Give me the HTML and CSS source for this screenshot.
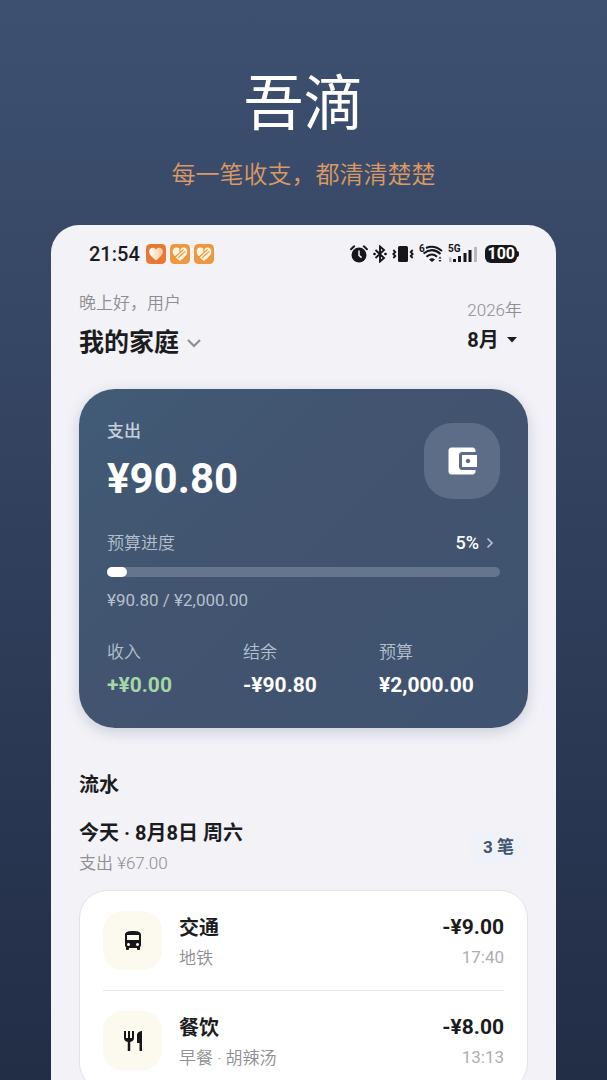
FILE: index.html
```html
<!DOCTYPE html>
<html lang="zh-CN">
<head>
<meta charset="utf-8">
<meta name="viewport" content="width=device-width, initial-scale=1">
<title>吾滴</title>
<link rel="stylesheet" href="styles.css">
</head>
<body>
<header class="hero">
  <h1 class="hero-title">吾滴</h1>
  <p class="hero-subtitle">每一笔收支，都清清楚楚</p>
</header>
<main class="phone">
  <div class="status">
    <div class="status-left">
      <span class="clock">21:54</span>
      <svg class="app" viewBox="0 0 20 20" aria-hidden="true"><defs><linearGradient id="h" x1="0" x2="1"><stop offset="0" stop-color="#fff"/><stop offset="1" stop-color="#ffc99b"/></linearGradient></defs><rect width="20" height="20" rx="4.5" fill="#e87736"/><path d="M10 16.500C6 13 3.200 11 3.200 7.600C3.200 5 5 3.800 6.700 3.800C8.300 3.800 9.500 4.700 10 5.700C10.500 4.700 11.700 3.800 13.300 3.800C15 3.800 16.800 5 16.800 7.600C16.800 11 14 13 10 16.500Z" fill="url(#h)"/></svg>
      <svg class="app" viewBox="0 0 20 20" aria-hidden="true"><rect width="20" height="20" rx="4.500" fill="#ed983f"/><path d="M10 17C6 13.500 2.600 11 2.600 7.400C2.600 4.800 4.500 3.400 6.500 3.400C8.200 3.400 9.500 4.300 10 5.400C10.500 4.300 11.800 3.400 13.500 3.400C15.500 3.400 17.400 4.800 17.400 7.400C17.400 11 14 13.500 10 17Z" fill="#fff3df"/><path d="M4.500 13.500L13.300 5.900M8.300 13.600L14.800 7.900M10 4V7.500" fill="none" stroke="#ed983f" stroke-width="1.200" stroke-linecap="round"/></svg>
      <svg class="app" viewBox="0 0 20 20" aria-hidden="true"><rect width="20" height="20" rx="4.500" fill="#ed983f"/><path d="M10 17C6 13.500 2.600 11 2.600 7.400C2.600 4.800 4.500 3.400 6.500 3.400C8.200 3.400 9.500 4.300 10 5.400C10.500 4.300 11.800 3.400 13.500 3.400C15.500 3.400 17.400 4.800 17.400 7.400C17.400 11 14 13.500 10 17Z" fill="#fff3df"/><path d="M4.500 13.500L13.300 5.900M8.300 13.600L14.800 7.900M10 4V7.500" fill="none" stroke="#ed983f" stroke-width="1.200" stroke-linecap="round"/></svg>
    </div>
    <div class="status-right">
      <svg width="18" height="18" viewBox="0 0 18 18" aria-hidden="true"><circle cx="9" cy="10" r="7.500" fill="#17171a"/><path d="M1 4.200L4.200 1.300M17 4.200L13.800 1.300" stroke="#17171a" stroke-width="2" stroke-linecap="round"/><path d="M9 5.500V10.300L11.600 12.600" fill="none" stroke="#f2f2f7" stroke-width="1.500"/></svg>
      <svg width="14" height="18" viewBox="0 0 14 18" aria-hidden="true"><path d="M2.500 5L11 13L7 16.500V1.500L11 5L2.500 13" fill="none" stroke="#17171a" stroke-width="1.900"/><circle cx="1.500" cy="9" r="1.300"/><circle cx="12.500" cy="9" r="1.300"/></svg>
      <svg width="22" height="18" viewBox="0 0 22 18" aria-hidden="true"><rect x="6" y="1" width="10" height="16" rx="1.500" fill="#17171a"/><path d="M1.300 5L3.300 7L1.300 9L3.300 11L1.300 13M20.700 5L18.700 7L20.700 9L18.700 11L20.700 13" fill="none" stroke="#17171a" stroke-width="1.800"/></svg>
      <svg width="24" height="20" viewBox="0 0 24 20" aria-hidden="true"><text x="0" y="8" class="tiny">6</text><g fill="none" stroke="#17171a" stroke-width="2"><path d="M7 4Q15 0.500 23 7M4.500 9.500Q13.500 2.500 21.500 10M7.500 12.800Q13 8.300 18 12.800"/></g><path d="M10 15.500Q13 13 16 15.500L13 18Z" fill="#17171a"/><path d="M19.500 14.500L21 12.500L22.500 14.500ZM19.500 16L21 18L22.500 16Z" fill="#17171a"/></svg>
      <svg width="30" height="20" viewBox="0 0 30 20" aria-hidden="true"><text x="0" y="8" class="tiny">5G</text><path d="M1 13.500h2.500v4.500h-2.500z" fill="#b8b8bd"/><path d="M5 15h3v3h-3zM10 12h3v6h-3zM15.500 9h3v9h-3zM20.500 6h3v12h-3z" fill="#17171a"/><path d="M26 3h3v15h-3z" fill="#b8b8bd"/></svg>
      <span class="battery">100</span>
    </div>
  </div>

  <section class="top">
    <div>
      <p class="muted">晚上好，用户</p>
      <button class="family" type="button">我的家庭<svg width="16" height="16" viewBox="0 0 16 16" aria-hidden="true"><path d="M2 5L8 11L14 5" fill="none" stroke="#8e8e93" stroke-width="2.200"/></svg></button>
    </div>
    <div class="date">
      <p class="muted">2026年</p>
      <button class="month" type="button">8月<svg width="12" height="8" viewBox="0 0 12 8" aria-hidden="true"><path d="M1 1H11L6 6.500Z" fill="#1c1c1e"/></svg></button>
    </div>
  </section>

  <section class="summary">
    <div class="summary-head">
      <div>
        <p class="spend-label">支出</p>
        <p class="spend">¥90.80</p>
      </div>
      <div class="wallet"><svg width="36" height="36" viewBox="0 0 24 24" aria-hidden="true"><path fill="#fff" d="M21 18v1c0 1.100-.9 2-2 2H5c-1.110 0-2-.9-2-2V5c0-1.100.89-2 2-2h14c1.100 0 2 .9 2 2v1h-9c-1.110 0-2 .9-2 2v8c0 1.100.89 2 2 2h9zm-9-2h10V8H12v8zm4-2.500c-.83 0-1.500-.67-1.500-1.500s.67-1.500 1.500-1.500 1.500.67 1.500 1.500-.67 1.500-1.500 1.500z"/></svg></div>
    </div>
    <div class="budget-head">
      <span id="budget">预算进度</span>
      <a class="percent" href="#budget">5%<svg width="8" height="12" viewBox="0 0 8 12" aria-hidden="true"><path d="M1.500 1.500L6 6L1.500 10.500" fill="none" stroke="#b9c4d6" stroke-width="1.600"/></svg></a>
    </div>
    <div class="track" role="progressbar" aria-labelledby="budget" aria-valuenow="5" aria-valuemin="0" aria-valuemax="100"><div class="fill" style="width:5%"></div></div>
    <p class="budget-text">¥90.80 / ¥2,000.00</p>
    <dl class="stats">
      <div><dt>收入</dt><dd class="income">+¥0.00</dd></div>
      <div><dt>结余</dt><dd>-¥90.80</dd></div>
      <div><dt>预算</dt><dd>¥2,000.00</dd></div>
    </dl>
  </section>

  <section class="flow">
    <h2 class="heading">流水</h2>
    <div class="day">
      <div>
        <h3 class="heading">今天 · 8月8日 周六</h3>
        <p class="muted">支出 ¥67.00</p>
      </div>
      <span class="count">3 笔</span>
    </div>
    <ul class="list">
      <li class="row">
        <div class="icon"><svg width="24" height="24" viewBox="0 0 24 24" aria-hidden="true"><path fill="#17171a" d="M4 16c0 .88.390 1.670 1 2.220V20c0 .55.450 1 1 1h1c.55 0 1-.45 1-1v-1h8v1c0 .55.450 1 1 1h1c.55 0 1-.45 1-1v-1.780c.61-.55 1-1.340 1-2.220V6c0-3.500-3.580-4-8-4s-8 .5-8 4v10zm3.500 1c-.83 0-1.500-.67-1.500-1.500S6.670 14 7.500 14s1.500.67 1.500 1.500S8.330 17 7.500 17zm9 0c-.83 0-1.500-.67-1.500-1.500s.67-1.500 1.500-1.500 1.500.67 1.500 1.500-.67 1.500-1.500 1.500zm1.500-6H6V6h12v5z"/></svg></div>
        <div class="info"><p class="heading">交通</p><p class="muted">地铁</p></div>
        <div class="cost"><p class="amount">-¥9.00</p><p class="time">17:40</p></div>
      </li>
      <li class="row">
        <div class="icon"><svg width="24" height="24" viewBox="0 0 24 24" aria-hidden="true"><path fill="#17171a" d="M11 9H9V2H7v7H5V2H3v7c0 2.120 1.660 3.840 3.750 3.970V22h2.500v-9.030C11.340 12.840 13 11.120 13 9V2h-2v7zm5-3v8h2.500v8H21V2c-2.760 0-5 2.240-5 4z"/></svg></div>
        <div class="info"><p class="heading">餐饮</p><p class="muted">早餐 · 胡辣汤</p></div>
        <div class="cost"><p class="amount">-¥8.00</p><p class="time">13:13</p></div>
      </li>
    </ul>
  </section>
</main>
</body>
</html>
```
FILE: styles.css
```css
* { box-sizing: border-box; margin: 0; padding: 0; }

body {
  height: 100vh;
  overflow: hidden;
  display: flex;
  flex-direction: column;
  padding: 67px 51px 0;
  background: linear-gradient(#3e5070, #364765 30%, #222d46);
  color: #1c1c1e;
  font-family: Roboto, "Noto Sans CJK SC", sans-serif;
  font-size: 17px;
  line-height: 24px;
}

button {
  border: 0;
  background: none;
  color: inherit;
  font-family: inherit;
  display: flex;
  align-items: center;
  cursor: pointer;
}

svg { flex: none; display: block; }

.hero { text-align: center; margin-bottom: 34px; }
.hero-title { color: #fff; font-size: 60px; font-weight: 400; line-height: 76px; }
.hero-subtitle { color: #dc9a62; font-size: 24px; font-weight: 350; line-height: 32px; margin-top: 16px; }

.phone {
  flex: 1 0 auto;
  padding: 16px 28px 0;
  border-radius: 28px 28px 0 0;
  background: #f2f2f7;
}

.status { display: flex; justify-content: space-between; padding: 0 11px 0 10px; height: 26px; }
.status-left { display: flex; align-items: center; gap: 4px; }
.status-right { display: flex; align-items: center; gap: 5px; }
.clock { padding-right: 2px; font-size: 20px; font-weight: 500; }
.app { width: 20px; height: 20px; }
.tiny { font-size: 10px; font-weight: 700; fill: #17171a; }
.battery {
  position: relative;
  margin-left: 2px;
  padding: 0 2px;
  border-radius: 6px;
  background: #17171a;
  color: #fff;
  font-size: 16px;
  font-weight: 700;
  line-height: 18px;
}
.battery::after {
  content: "";
  position: absolute;
  left: 100%;
  top: 6px;
  width: 2px;
  height: 6px;
  border-radius: 0 2px 2px 0;
  background: #17171a;
}

.muted { color: #8e8e93; font-weight: 350; }
.heading { font-size: 20px; font-weight: 700; line-height: 28px; }
.amount { font-size: 21px; font-weight: 700; line-height: 28px; }

.top { display: flex; justify-content: space-between; align-items: center; padding-top: 24px; }
.family { gap: 7px; font-size: 25px; font-weight: 700; line-height: 36px; margin-top: 10px; }
.date { padding: 0 6px 0 0; }
.month { gap: 7px; font-size: 20px; font-weight: 700; line-height: 28px; margin-top: 4px; }

.summary {
  margin-top: 28px;
  padding: 34px 28px 29px;
  border-radius: 36px;
  background: linear-gradient(135deg, #415b76, #42546f 40%, #3f526f);
  box-shadow: 0 4px 14px #3f526f38;
  color: #b5c0cf;
  font-weight: 350;
}
.summary-head { display: flex; justify-content: space-between; align-items: flex-start; }
.spend-label { margin-top: -4px; font-weight: 500; color: #c6d0dc; }
.spend { margin-top: 8px; color: #fff; font-size: 42px; font-weight: 700; line-height: 56px; }
.wallet {
  display: grid;
  place-items: center;
  width: 76px;
  height: 76px;
  border-radius: 28px;
  background: #5d6d88;
}
.budget-head { display: flex; justify-content: space-between; align-items: center; margin-top: 24px; }
.percent { display: flex; align-items: center; gap: 7px; padding-right: 6px; color: #fff; font-size: 18px; font-weight: 500; text-decoration: none; }
.track { height: 10px; margin-top: 12px; border-radius: 5px; background: #65758d; }
.fill { height: 100%; border-radius: 5px; background: #fff; }
.budget-text { margin-top: 11px; font-size: 17px; font-weight: 400; }
.stats { display: grid; grid-template-columns: repeat(3, 1fr); gap: 15px; margin-top: 28px; }
.stats dd { margin-top: 7px; color: #fff; font-size: 21px; font-weight: 700; line-height: 28px; }
.stats .income { color: #a5d6a7; }

.flow { padding-top: 43px; }
.day { display: flex; justify-content: space-between; align-items: center; margin-top: 20px; }
.day .muted { margin-top: 4px; }
.count { padding: 4px 14px; border-radius: 14px; background: #eff3f9; color: #42546f; font-weight: 700; }

.list {
  list-style: none;
  margin-top: 15px;
  padding: 0 23px;
  border: 1px solid #e2e2e6;
  border-radius: 28px;
  background: #fff;
}
.row { display: flex; align-items: center; gap: 17px; padding: 20px 0; }
.row + .row { border-top: 1px solid #e5e5e8; }
.icon { display: grid; place-items: center; width: 59px; height: 59px; border-radius: 20px; background: #fcf9ee; }
.info { flex: 1; padding-top: 2px; }
.info .muted, .time { margin-top: 4px; }
.cost { text-align: right; }
.time { color: #aeaeb2; font-weight: 400; }
```
